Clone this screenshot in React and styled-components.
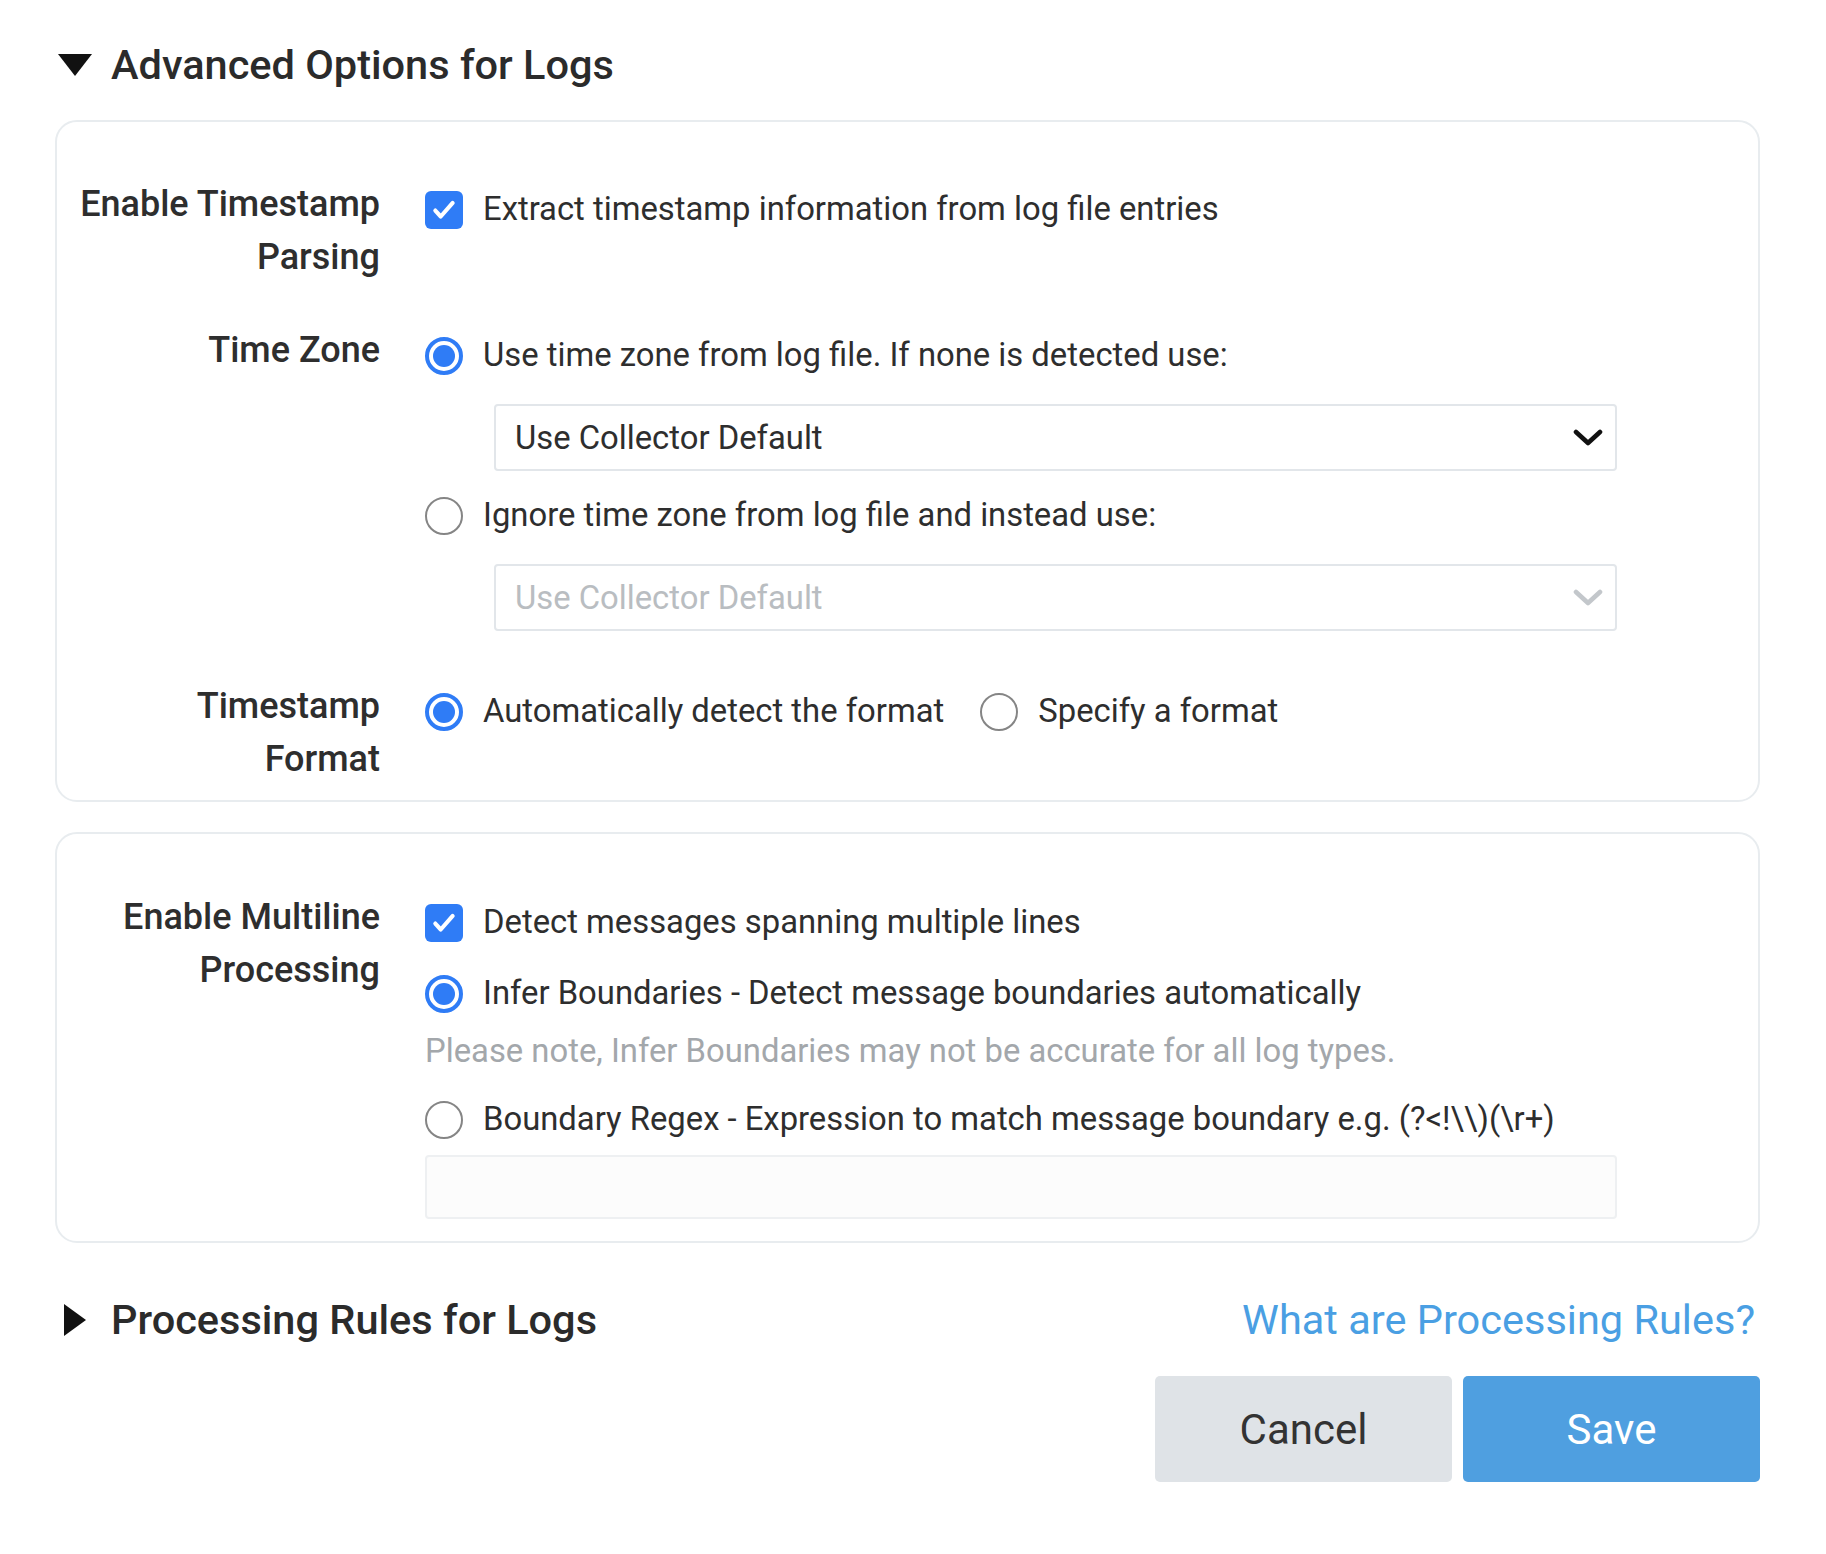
import React from "react";
import styled, { createGlobalStyle } from "styled-components";

const GlobalStyle = createGlobalStyle`
  html, body { margin: 0; padding: 0; background: #ffffff; }
  body { font-family: Roboto, "Liberation Sans", Arial, sans-serif; color: #333333; }
  * { box-sizing: border-box; }
`;

const Page = styled.div`
  padding: 38px 66px 60px 55px;
  width: 1826px;
`;

const SectionHeader = styled.div`
  display: flex;
  align-items: center;
  gap: 19px;
  height: 53px;
  padding-left: 3px;
`;

const Caret = styled.span`
  display: inline-block;
  flex: none;
  width: 0;
  height: 0;
  ${(p) =>
    p.$open
      ? `border-left: 17px solid transparent; border-right: 17px solid transparent; border-top: 22px solid #111;`
      : `border-top: 16px solid transparent; border-bottom: 16px solid transparent; border-left: 22px solid #111; margin-left: 6px; margin-right: 6px;`}
`;

const HeaderTitle = styled.span`
  font-size: 41.5px;
  font-weight: 500;
  color: #2b2b2b;
  line-height: 53px;
`;

const Card = styled.div`
  border: 2px solid #e8ecef;
  border-radius: 22px;
  padding: ${(p) => p.$pt}px 141px ${(p) => p.$pb}px 0;
  margin-top: ${(p) => p.$mt || 0}px;
  display: flex;
  flex-direction: column;
`;

const FormRow = styled.div`
  display: grid;
  grid-template-columns: 323px 1fr;
  column-gap: 45px;
  margin-top: ${(p) => p.$mt || 0}px;
`;

const Label = styled.div`
  text-align: right;
  font-size: 36px;
  font-weight: 500;
  line-height: 53px;
  padding-top: 2px;
  color: #2e2e2e;
`;

const Controls = styled.div`
  display: flex;
  flex-direction: column;
  padding-top: 7px;
`;

const OptionLine = styled.label`
  display: flex;
  align-items: center;
  gap: 20px;
  min-height: 53px;
  font-size: 32.8px;
  line-height: 53px;
  color: #2e2e2e;
  white-space: nowrap;
  margin-top: ${(p) => p.$mt || 0}px;
`;

const OptionGroup = styled.div`
  display: flex;
  align-items: center;
  gap: 36px;
`;

const CheckBox = styled.span`
  width: 38px;
  height: 38px;
  flex: none;
  border-radius: 6px;
  background: #2f7cf6;
  display: inline-flex;
  align-items: center;
  justify-content: center;
`;

const Radio = styled.span`
  width: 38px;
  height: 38px;
  flex: none;
  border-radius: 50%;
  border: ${(p) => (p.$checked ? "4px solid #2f7cf6" : "2px solid #858585")};
  background: #fff;
  display: inline-flex;
  align-items: center;
  justify-content: center;
  &::after {
    content: "";
    display: ${(p) => (p.$checked ? "block" : "none")};
    width: 22px;
    height: 22px;
    border-radius: 50%;
    background: #2f7cf6;
  }
`;

const SelectBox = styled.div`
  height: 67px;
  margin-left: 69px;
  margin-top: ${(p) => p.$mt || 0}px;
  border: 2px solid #e2e6ea;
  border-radius: 4px;
  display: flex;
  align-items: center;
  justify-content: space-between;
  padding: 0 12px 0 19px;
  font-size: 32.8px;
  color: ${(p) => (p.$disabled ? "#b9bdc1" : "#2e2e2e")};
`;

const Note = styled.div`
  font-size: 32.8px;
  line-height: 53px;
  color: #a3a7ab;
  white-space: nowrap;
  margin-top: ${(p) => p.$mt || 0}px;
`;

const TextInput = styled.div`
  height: 64px;
  margin-top: ${(p) => p.$mt || 0}px;
  border: 2px solid #eef0f2;
  border-radius: 4px;
  background: #fcfcfc;
`;

const FooterRow = styled.div`
  display: flex;
  align-items: center;
  justify-content: space-between;
  margin-top: 50px;
`;

const HelpLink = styled.a`
  font-size: 41.5px;
  color: #4a9fe3;
  text-decoration: none;
  line-height: 53px;
  margin-right: 5px;
`;

const Actions = styled.div`
  display: flex;
  justify-content: flex-end;
  gap: 11px;
  margin-top: 30px;
`;

const Button = styled.button`
  width: 297px;
  height: 106px;
  border: none;
  border-radius: 5px;
  font-family: Roboto, "Liberation Sans", Arial, sans-serif;
  font-size: 42px;
  background: ${(p) => (p.$primary ? "#4f9fe0" : "#dfe3e7")};
  color: ${(p) => (p.$primary ? "#ffffff" : "#333333")};
`;

const Check = () => (
  <svg width="26" height="26" viewBox="0 0 24 24" fill="none">
    <path d="M4 12.5l5 5.5L20 5.5" stroke="#fff" strokeWidth="3.8" strokeLinecap="round" strokeLinejoin="round" />
  </svg>
);

const Chevron = ({ disabled }) => (
  <svg width="30" height="20" viewBox="0 0 30 20" fill="none">
    <path d="M3 4l12 11L27 4" stroke={disabled ? "#c3c7cb" : "#111"} strokeWidth="4.6" strokeLinecap="round" strokeLinejoin="round" />
  </svg>
);

export default function App() {
  return (
    <>
      <GlobalStyle />
      <Page>
        <SectionHeader>
          <Caret $open />
          <HeaderTitle>Advanced Options for Logs</HeaderTitle>
        </SectionHeader>

        <Card $pt={54} $pb={14} $mt={29}>
          <FormRow>
            <Label>
              Enable Timestamp
              <br />
              Parsing
            </Label>
            <Controls>
              <OptionLine>
                <CheckBox>
                  <Check />
                </CheckBox>
                Extract timestamp information from log file entries
              </OptionLine>
            </Controls>
          </FormRow>

          <FormRow $mt={38}>
            <Label>Time Zone</Label>
            <Controls>
              <OptionLine>
                <Radio $checked />
                Use time zone from log file. If none is detected use:
              </OptionLine>
              <SelectBox $mt={22}>
                Use Collector Default
                <Chevron />
              </SelectBox>
              <OptionLine $mt={18}>
                <Radio />
                Ignore time zone from log file and instead use:
              </OptionLine>
              <SelectBox $mt={22} $disabled>
                Use Collector Default
                <Chevron disabled />
              </SelectBox>
            </Controls>
          </FormRow>

          <FormRow $mt={47}>
            <Label>
              Timestamp
              <br />
              Format
            </Label>
            <Controls>
              <OptionGroup>
                <OptionLine>
                  <Radio $checked />
                  Automatically detect the format
                </OptionLine>
                <OptionLine>
                  <Radio />
                  Specify a format
                </OptionLine>
              </OptionGroup>
            </Controls>
          </FormRow>
        </Card>

        <Card $pt={55} $pb={22} $mt={30}>
          <FormRow>
            <Label>
              Enable Multiline
              <br />
              Processing
            </Label>
            <Controls>
              <OptionLine>
                <CheckBox>
                  <Check />
                </CheckBox>
                Detect messages spanning multiple lines
              </OptionLine>
              <OptionLine $mt={18}>
                <Radio $checked />
                Infer Boundaries - Detect message boundaries automatically
              </OptionLine>
              <Note $mt={5}>Please note, Infer Boundaries may not be accurate for all log types.</Note>
              <OptionLine $mt={15}>
                <Radio />
                {"Boundary Regex - Expression to match message boundary e.g. (?<!\\\\)(\\r+)"}
              </OptionLine>
              <TextInput $mt={9} />
            </Controls>
          </FormRow>
        </Card>

        <FooterRow>
          <SectionHeader>
            <Caret />
            <HeaderTitle>Processing Rules for Logs</HeaderTitle>
          </SectionHeader>
          <HelpLink href="#">What are Processing Rules?</HelpLink>
        </FooterRow>

        <Actions>
          <Button>Cancel</Button>
          <Button $primary>Save</Button>
        </Actions>
      </Page>
    </>
  );
}
